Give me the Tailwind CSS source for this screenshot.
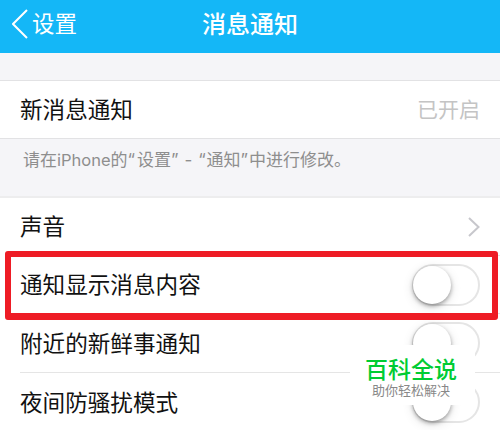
<!DOCTYPE html>
<html lang="zh-CN">
<head>
  <meta charset="UTF-8" />
  <meta name="viewport" content="width=device-width, initial-scale=1.0" />
  <title>消息通知</title>
  <script src="https://cdn.jsdelivr.net/npm/@tailwindcss/browser@4"></script>
</head>
<body class="w-[500px] h-[430px] overflow-hidden relative bg-white text-[#111] font-['Noto_Sans_CJK_SC',sans-serif]">

  <!-- Navbar -->
  <header class="h-[53px] bg-[#14b7f7] text-white grid grid-cols-[1fr_auto_1fr] items-center pb-[6px]">
    <a href="#" class="flex items-center gap-[4px] pl-3 text-[22.5px] leading-none">
      <svg class="w-4 h-[30px]" viewBox="0 0 16 30" fill="none" stroke="currentColor" stroke-width="2"><path d="M15 1 L1 15 L15 29" /></svg>
      <span class="pb-[2px]">设置</span>
    </a>
    <h1 class="text-[24px] leading-none font-medium pb-[2px]">消息通知</h1>
  </header>

  <div class="h-7 bg-[#f5f5f8] border-b border-[#e2e2e4]"></div>

  <section class="h-[57px] flex items-center justify-between px-5">
    <span class="text-[22.6px] leading-none">新消息通知</span>
    <span class="text-[21px] leading-none text-[#c4c4c4] pb-[2px]">已开启</span>
  </section>

  <p class="h-[60px] bg-[#f5f5f8] border-t border-b-2 border-t-[#e2e2e4] border-b-[#ededee] pl-[23px] pt-[13px] text-[17px] leading-[17px] text-[#8e8e8e] whitespace-nowrap font-[Inter,'Noto_Sans_CJK_SC',sans-serif]">请在<span class="text-[16.5px]">iPhone</span>的<span class="tracking-[2px]">“</span>设置<span class="tracking-[0.6px]">” - “</span>通知<span class="tracking-[1px]">”</span>中进行修改。</p>

  <!-- 开关列表 -->
  <ul class="text-[22.6px] leading-none">
    <li class="ml-5 pr-5 h-[58px] flex items-center justify-between border-b border-[#e5e5e5]">
      <span>声音</span>
      <svg class="w-3 h-5" viewBox="0 0 12 20" fill="none" stroke="#c7c7cc" stroke-width="2"><path d="M1 1 L10.500 10 L1 19" /></svg>
    </li>
    <li class="ml-5 pr-5 h-[58px] flex items-center justify-between border-b border-[#e5e5e5]">
      <span>通知显示消息内容</span>
      <div class="w-[68px] h-[42px] rounded-full border-2 border-[#e5e5e5] bg-white"><div class="w-[38px] h-[38px] -ml-px rounded-full bg-white shadow-[0_2px_4px_rgba(0,0,0,0.35),0_3px_12px_rgba(0,0,0,0.12)]"></div></div>
    </li>
    <li class="ml-5 pr-5 h-[59px] flex items-center justify-between border-b border-[#e5e5e5]">
      <span>附近的新鲜事通知</span>
      <div class="w-[68px] h-[42px] rounded-full border-2 border-[#e5e5e5] bg-white"><div class="w-[38px] h-[38px] -ml-px rounded-full bg-white shadow-[0_2px_4px_rgba(0,0,0,0.35),0_3px_12px_rgba(0,0,0,0.12)]"></div></div>
    </li>
    <li class="ml-5 pr-5 h-[58px] flex items-center justify-between">
      <span>夜间防骚扰模式</span>
      <div class="w-[68px] h-[42px] rounded-full border-2 border-[#e5e5e5] bg-white"><div class="w-[38px] h-[38px] -ml-px rounded-full bg-white shadow-[0_2px_4px_rgba(0,0,0,0.35),0_3px_12px_rgba(0,0,0,0.12)]"></div></div>
    </li>
  </ul>

  <!-- 红框标注 -->
  <div class="absolute left-[5px] top-[251px] w-[493px] h-[69px] border-[6px] border-b-[7px] border-[#ee1c25] rounded-[3px]"></div>

  <!-- 水印 -->
  <div class="absolute left-[350px] top-[345px] w-[125px] h-[60px] bg-white flex flex-col items-center pr-[3px] pt-[11px]">
    <span class="text-[23px] leading-[24px] font-medium text-[#0c3]">百科全说</span>
    <span class="text-[13px] leading-[20px] text-[#888]">助你轻松解决</span>
  </div>

</body>
</html>
